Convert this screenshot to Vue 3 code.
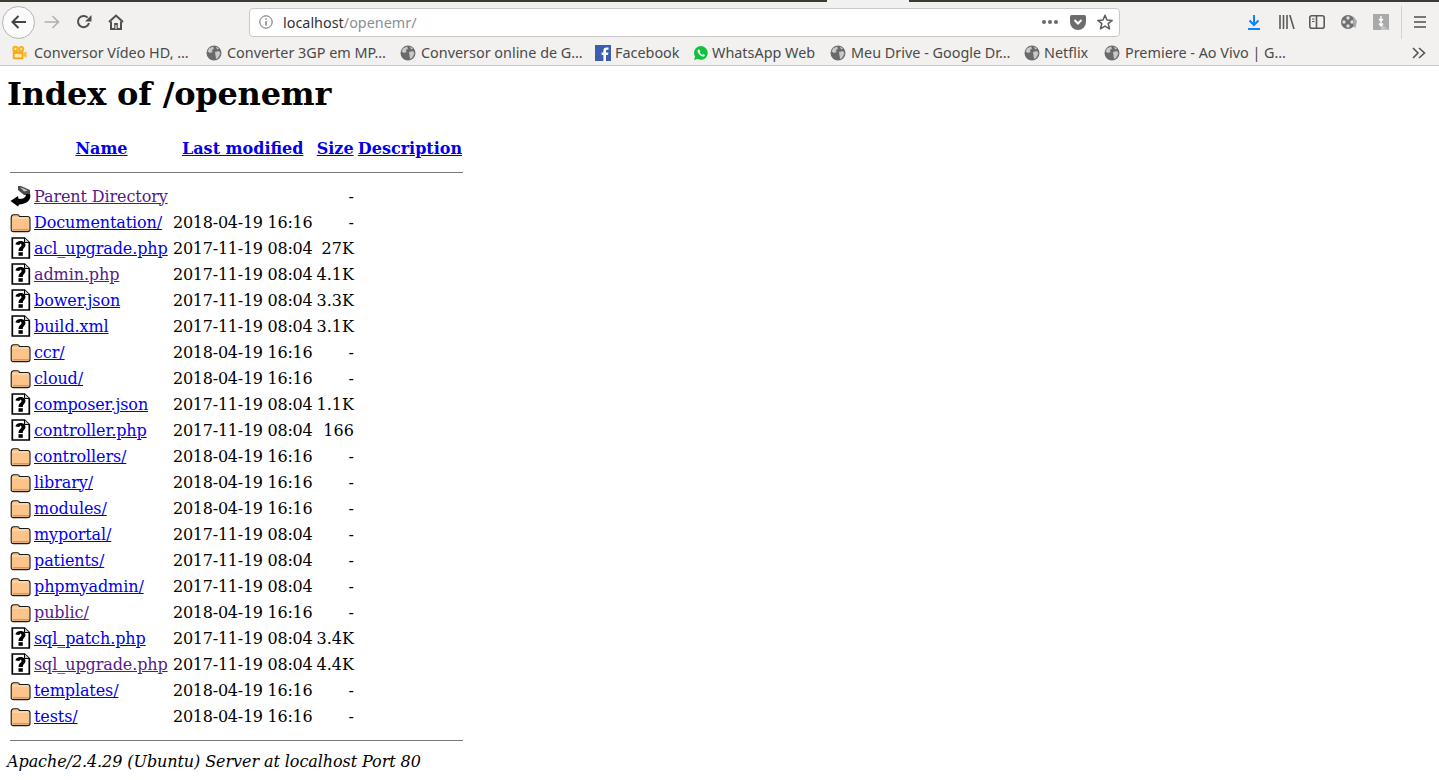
<script setup>
const bookmarks = [
  { label: 'Conversor Vídeo HD, …', icon: 'cam', width: 195, gap: 7 },
  { label: 'Converter 3GP em MP…', icon: 'globe', width: 194, gap: 5 },
  { label: 'Conversor online de G…', icon: 'globe', width: 195, gap: 5 },
  { label: 'Facebook', icon: 'fb', width: 98, gap: 4 },
  { label: 'WhatsApp Web', icon: 'wa', width: 137, gap: 3 },
  { label: 'Meu Drive - Google Dr…', icon: 'globe', width: 194, gap: 5 },
  { label: 'Netflix', icon: 'globe', width: 80, gap: 4 },
  { label: 'Premiere - Ao Vivo | G…', icon: 'globe', width: 200, gap: 5 }
]
const D1 = '2018-04-19 16:16'
const D2 = '2017-11-19 08:04'
const rows = [
  { name: 'Parent Directory', date: '', size: '-', icon: 'back', visited: true },
  { name: 'Documentation/', date: D1, size: '-', icon: 'folder' },
  { name: 'acl_upgrade.php', date: D2, size: '27K', icon: 'unknown' },
  { name: 'admin.php', date: D2, size: '4.1K', icon: 'unknown', visited: true },
  { name: 'bower.json', date: D2, size: '3.3K', icon: 'unknown' },
  { name: 'build.xml', date: D2, size: '3.1K', icon: 'unknown' },
  { name: 'ccr/', date: D1, size: '-', icon: 'folder' },
  { name: 'cloud/', date: D1, size: '-', icon: 'folder' },
  { name: 'composer.json', date: D2, size: '1.1K', icon: 'unknown' },
  { name: 'controller.php', date: D2, size: '166', icon: 'unknown' },
  { name: 'controllers/', date: D1, size: '-', icon: 'folder' },
  { name: 'library/', date: D1, size: '-', icon: 'folder' },
  { name: 'modules/', date: D1, size: '-', icon: 'folder' },
  { name: 'myportal/', date: D2, size: '-', icon: 'folder' },
  { name: 'patients/', date: D2, size: '-', icon: 'folder' },
  { name: 'phpmyadmin/', date: D2, size: '-', icon: 'folder' },
  { name: 'public/', date: D1, size: '-', icon: 'folder', visited: true },
  { name: 'sql_patch.php', date: D2, size: '3.4K', icon: 'unknown' },
  { name: 'sql_upgrade.php', date: D2, size: '4.4K', icon: 'unknown', visited: true },
  { name: 'templates/', date: D1, size: '-', icon: 'folder' },
  { name: 'tests/', date: D1, size: '-', icon: 'folder' }
]
</script>

<template>
  <div class="page">
    <svg class="defs" width="0" height="0" aria-hidden="true">
      <symbol id="i-globe" viewBox="0 0 16 16">
        <circle cx="8" cy="8" r="7.500" fill="#6a6a6a" />
        <path d="M3 3.500 L7 1.500 L8 3.500 L6 5 L6.500 7 L4 8 L1.500 6.500 Z M9 7 L13 6 L14.500 8.500 L12 13 L10 14 L9.500 10.500 Z M10 1.500 L13 3.500 L11 4.500 Z" fill="#c9c9c9" />
      </symbol>
      <symbol id="i-cam" viewBox="0 0 18 18">
        <circle cx="5" cy="4.500" r="3.600" fill="#f7b21c" />
        <circle cx="11.500" cy="4.500" r="3.400" fill="#f7b21c" />
        <rect x="2" y="7" width="12" height="9" rx="1" fill="#f9a51a" />
        <path d="M14 9 L17.500 7 V14.500 L14 12.500 Z" fill="#f9c02e" />
        <circle cx="5" cy="4.500" r="1.200" fill="#fff3c4" />
        <circle cx="11.500" cy="4.500" r="1.200" fill="#fff3c4" />
        <rect x="4" y="10" width="8" height="4" fill="#ffe9a8" />
      </symbol>
      <symbol id="i-fb" viewBox="0 0 16 16">
        <rect width="16" height="16" fill="#3b5fae" />
        <path d="M11 16 V10 H13 L13.400 7.600 H11 V6 C11 5.200 11.400 4.800 12.200 4.800 H13.500 V2.600 H11.600 C9.600 2.600 8.400 3.800 8.400 5.800 V7.600 H6.600 V10 H8.400 V16 Z" fill="#fff" />
      </symbol>
      <symbol id="i-wa" viewBox="0 0 16 16">
        <path d="M8 1 A6.900 6.900 0 0 0 2.100 11.500 L1 15 L4.600 14 A6.900 6.900 0 1 0 8 1 Z" fill="#12c13f" />
        <path d="M5.400 4.400 C4.500 5 4.300 6.400 5.300 8 C6.400 9.900 8.400 11.500 10.200 11.600 C11.200 11.600 11.900 10.900 11.900 10.100 L10.200 9.100 L9.300 9.900 C8.200 9.500 7 8.300 6.500 7 L7.200 6.200 L6.200 4.400 Z" fill="#fff" />
      </symbol>
      <symbol id="i-folder" viewBox="0 0 20 22">
        <path d="M.7 7 Q.7 3.700 3 3.700 H7 Q8.500 3.700 9 5.500 H17 Q19.500 5.500 19.500 8 V18.500 Q19.500 20.600 17 20.600 H3 Q.7 20.600 .7 18.500 Z" fill="#fcc48a" stroke="#1a1a1a" stroke-width="1.100" />
        <path d="M3 18.800 H18" stroke="#7a4f22" stroke-width="1" stroke-dasharray="1 1" />
        <path d="M2 7 H18" stroke="#ffe5c4" stroke-width="1" />
      </symbol>
      <symbol id="i-unknown" viewBox="0 0 20 22">
        <path d="M1.800 1 H14 L18.800 5.500 V21 H1.800 Z" fill="#fff" stroke="#000" stroke-width="1.700" />
        <path d="M14 1 V5.500 H18.800" fill="#ccc" stroke="#000" stroke-width="1" />
        <path d="M5 7.500 C5 2.800 15 2.600 15 7.800 C15 11 12.300 10.800 12.300 14 H8 C8 10 11 10 11 8 C11 6.400 9 6.500 9 8 Z" fill="#000" />
        <rect x="8" y="15.200" width="4.300" height="3.600" fill="#000" />
      </symbol>
      <symbol id="i-back" viewBox="0 0 21 22">
        <path d="M8 1 L11 1 L20 5 V10 L14 10 L8 5 Z" fill="#4a4a4a" />
        <path d="M10 2 L18 5.500 L14 6.500 Z" fill="#c4c4c4" />
        <path d="M20 9 C22 15 16 19.500 9 19.500 L8 21.500 L.5 16 L8 11 L8.500 13.800 C13 14.500 16 12.500 16 9 Z" fill="#000" />
      </symbol>
    </svg>

    <header class="chrome">
      <div class="tabstrip">
        <div class="strip-dark strip-left"></div>
        <div class="strip-gap"></div>
        <div class="strip-dark strip-right"></div>
      </div>
      <div class="toolbar">
        <button class="nav back">
          <svg width="18" height="18" viewBox="0 0 18 18"><path d="M16 9 H2.500 M8.500 3 L2.500 9 L8.500 15" fill="none" stroke="#444" stroke-width="2" /></svg>
        </button>
        <span class="nav-icon fwd">
          <svg width="18" height="18" viewBox="0 0 18 18"><path d="M1.500 9 H15.500 M9.500 3 L15.500 9 L9.500 15" fill="none" stroke="#b0b0b0" stroke-width="1.600" /></svg>
        </span>
        <span class="nav-icon reload">
          <svg width="16" height="16" viewBox="0 0 16 16"><path d="M13 9 A5.600 5.600 0 1 1 11.600 3.600" fill="none" stroke="#4f4f4f" stroke-width="2" /><path d="M15.500 1 V7.500 H9 Z" fill="#4f4f4f" /></svg>
        </span>
        <span class="nav-icon home">
          <svg width="16" height="16" viewBox="0 0 16 16"><path d="M1 8 L8 1.500 L15 8" fill="none" stroke="#4f4f4f" stroke-width="2" /><path d="M3 7.500 V15 H13 V7.500" fill="none" stroke="#4f4f4f" stroke-width="2" /><rect x="6.200" y="9" width="3.600" height="6" fill="#4f4f4f" /><rect x="7.400" y="11" width="1.200" height="4" fill="#f2f1ef" /></svg>
        </span>
        <div class="urlbar">
          <svg class="info" width="14" height="14" viewBox="0 0 14 14"><circle cx="7" cy="7" r="6.200" fill="none" stroke="#6a6a6a" stroke-width="1" /><rect x="6.400" y="6" width="1.300" height="4.600" fill="#6a6a6a" /><rect x="6.400" y="3.400" width="1.300" height="1.400" fill="#6a6a6a" /></svg>
          <span class="url"><span class="host">localhost</span><span class="path">/openemr/</span></span>
          <span class="dots"><i></i><i></i><i></i></span>
          <svg class="pocket" width="16" height="15" viewBox="0 0 16 15"><path d="M1.500 0 H14.500 Q16 0 16 1.500 V7 A8 8 0 0 1 0 7 V1.500 Q0 0 1.500 0 Z" fill="#6d6d6d" /><path d="M4.500 5 L8 8.500 L11.500 5" fill="none" stroke="#fff" stroke-width="2" /></svg>
          <svg class="star" width="16" height="16" viewBox="0 0 16 16"><path d="M8 1.200 L10 6 L15.200 6.400 L11.200 9.700 L12.500 14.800 L8 12.100 L3.500 14.800 L4.800 9.700 L.8 6.400 L6 6 Z" fill="none" stroke="#5c5c5c" stroke-width="1.500" stroke-linejoin="round" /></svg>
        </div>
        <div class="tools">
          <svg class="tool dl" width="14" height="16" viewBox="0 0 14 16"><path d="M7 1 V11 M2.500 6.500 L7 11 L11.500 6.500" fill="none" stroke="#0a84ff" stroke-width="2" /><rect x="1" y="14" width="12" height="2" fill="#0a84ff" /></svg>
          <svg class="tool lib" width="16" height="14" viewBox="0 0 16 14"><path d="M1 0 V14 M4.500 0 V14 M8 0 V14 M10.800 0 L15 14" fill="none" stroke="#5a5a5a" stroke-width="1.600" /></svg>
          <svg class="tool side" width="16" height="14" viewBox="0 0 16 14"><rect x=".8" y=".8" width="14.400" height="12.400" rx="2" fill="none" stroke="#5a5a5a" stroke-width="1.600" /><path d="M7.500 1 V13" stroke="#5a5a5a" stroke-width="1.600" /><path d="M3 4 H5.500 M3 6.500 H5.500" stroke="#5a5a5a" /></svg>
          <svg class="tool reel" width="16" height="16" viewBox="0 0 16 16"><circle cx="7" cy="8" r="7" fill="#6f6f6f" /><circle cx="7" cy="4" r="1.700" fill="#ddd" /><circle cx="7" cy="12" r="1.700" fill="#ddd" /><circle cx="3" cy="8" r="1.700" fill="#ddd" /><circle cx="11" cy="8" r="1.700" fill="#ddd" /><path d="M12 2 L16 7 L14.500 14 L12.500 13 Z" fill="#aaa" /></svg>
          <svg class="tool zip" width="16" height="16" viewBox="0 0 16 16"><rect width="16" height="16" fill="#a9a9a9" /><path d="M8 10 L16 16 H8 Z" fill="#c4c4c4" /><path d="M8 2 V12 M6 9.500 L8 12 L10 9.500 M6 5 L8 7 L10 5" fill="none" stroke="#fff" stroke-width="1.400" /></svg>
          <span class="divider"></span>
          <svg class="tool menu" width="12" height="12" viewBox="0 0 12 12"><path d="M0 1 H12 M0 6 H12 M0 11 H12" stroke="#4f4f4f" stroke-width="1.600" /></svg>
        </div>
      </div>
      <div class="bookmarks">
        <div v-for="b in bookmarks" :key="b.label" class="bm" :style="{ width: b.width + 'px', gap: b.gap + 'px' }">
          <svg class="bm-icon" width="16" height="16"><use :href="'#i-' + b.icon" /></svg>
          <span class="bm-label">{{ b.label }}</span>
        </div>
        <svg class="more" width="14" height="12" viewBox="0 0 14 12"><path d="M1 1 L6 6 L1 11 M7 1 L12.500 6 L7 11" fill="none" stroke="#555" stroke-width="1.600" /></svg>
      </div>
    </header>

    <main class="content">
      <h1>Index of /openemr</h1>
      <table>
        <thead>
          <tr class="head">
            <th class="c-icon"></th>
            <th class="c-name"><a class="link">Name</a></th>
            <th class="c-date"><a class="link">Last modified</a></th>
            <th class="c-size"><a class="link">Size</a></th>
            <th class="c-desc"><a class="link">Description</a></th>
          </tr>
          <tr><th colspan="5" class="rule"><hr /></th></tr>
        </thead>
        <tbody>
          <tr v-for="r in rows" :key="r.name" class="row">
            <td class="c-icon"><svg class="file" width="21" height="22"><use :href="'#i-' + r.icon" /></svg></td>
            <td class="name"><a class="link" :class="{ visited: r.visited }">{{ r.name }}</a></td>
            <td class="date">{{ r.date }}</td>
            <td class="size">{{ r.size }}</td>
            <td></td>
          </tr>
          <tr><th colspan="5" class="rule rule-end"><hr /></th></tr>
        </tbody>
      </table>
      <address>Apache/2.4.29 (Ubuntu) Server at localhost Port 80</address>
    </main>
  </div>
</template>

<style scoped>
.page {
  width: 1439px;
  height: 780px;
  overflow: hidden;
  background: #fff;
  font-family: "DejaVu Serif", serif;
  color: #000;
}
.defs { position: absolute; }
.chrome {
  height: 66px;
  background: #f2f1ef;
  border-bottom: 1px solid #c9c9c9;
  box-sizing: border-box;
  font-family: "Noto Sans", sans-serif;
}
.tabstrip { display: flex; height: 2px; }
.strip-dark { background: #3b3a35; }
.strip-left { width: 827px; }
.strip-gap { width: 82px; }
.strip-right { flex: 1; }
.toolbar {
  height: 40px;
  display: flex;
  align-items: center;
  box-sizing: border-box;
}
.nav {
  width: 33px;
  height: 33px;
  margin-left: 2px;
  padding: 0;
  border: 1px solid #b3b3b3;
  border-radius: 50%;
  background: #fbfbfb;
  display: flex;
  align-items: center;
  justify-content: center;
}
.nav-icon { display: flex; }
.fwd { margin-left: 8px; }
.reload { margin-left: 15px; }
.home { margin-left: 16px; }
.urlbar {
  margin-left: 125px;
  width: 871px;
  height: 29px;
  box-sizing: border-box;
  background: #fff;
  border: 1px solid #c9c9c9;
  border-radius: 4px;
  display: flex;
  align-items: center;
  padding: 0 6px 0 9px;
  font-size: 14.4px;
}
.url { margin-left: 10px; flex: 1; }
.host { color: #333; }
.path { color: #8a8f96; }
.dots { display: flex; gap: 2px; margin-right: 12px; }
.dots i { width: 4px; height: 4px; border-radius: 50%; background: #6a6a6a; }
.pocket { margin-right: 11px; }
.tools { display: flex; align-items: center; flex: 1; height: 100%; }
.tool { flex: none; }
.dl { margin-left: 127px; }
.lib { margin-left: 18px; }
.side { margin-left: 14px; }
.reel { margin-left: 16px; }
.zip { margin-left: 16px; }
.divider { width: 1px; height: 33px; background: #d4d3d1; margin-left: 12px; }
.menu { margin-left: 12px; }
.bookmarks {
  height: 21px;
  display: flex;
  align-items: center;
  padding-left: 11px;
}
.bm { display: flex; align-items: center; flex: none; }
.bm-icon { flex: none; }
.bm-label { font-size: 14.4px; color: #4a4a4a; white-space: nowrap; }
.more { margin-left: 108px; flex: none; }
.content { padding: 8px 8px 0; }
h1 {
  margin: 2px 0 0 -1px;
  font-size: 32px;
  font-weight: 700;
  line-height: 37px;
  letter-spacing: -0.2px;
}
table { border-spacing: 2px; margin-top: 21px; border-collapse: separate; }
th, td { padding: 1px; font-size: 16px; line-height: 19px; }
th { font-weight: 700; text-align: center; }
.head th { height: 22px; }
.c-icon { width: 20px; padding: 0 1px 0 0; }
.c-name { width: 135px; }
.c-date { width: 138px; }
.c-size { width: 35px; }
.c-desc { width: 102px; }
.row td { height: 22px; vertical-align: middle; white-space: nowrap; }
.file { display: block; margin-right: -1px; }
.name { letter-spacing: -0.1px; }
.date { letter-spacing: -0.25px; }
.size { text-align: right; }
.rule { padding: 0; }
.rule hr { margin: 10px 0 9px; height: 1px; border: 0; background: #7a7a7a; }
.rule-end hr { margin: 10px 0 0; }
.link { color: #0000ee; text-decoration: underline; }
.visited { color: #551a8b; }
address { font-style: italic; font-size: 16px; line-height: 19px; margin: 9px 0 0 -1px; letter-spacing: -0.08px; }
</style>
